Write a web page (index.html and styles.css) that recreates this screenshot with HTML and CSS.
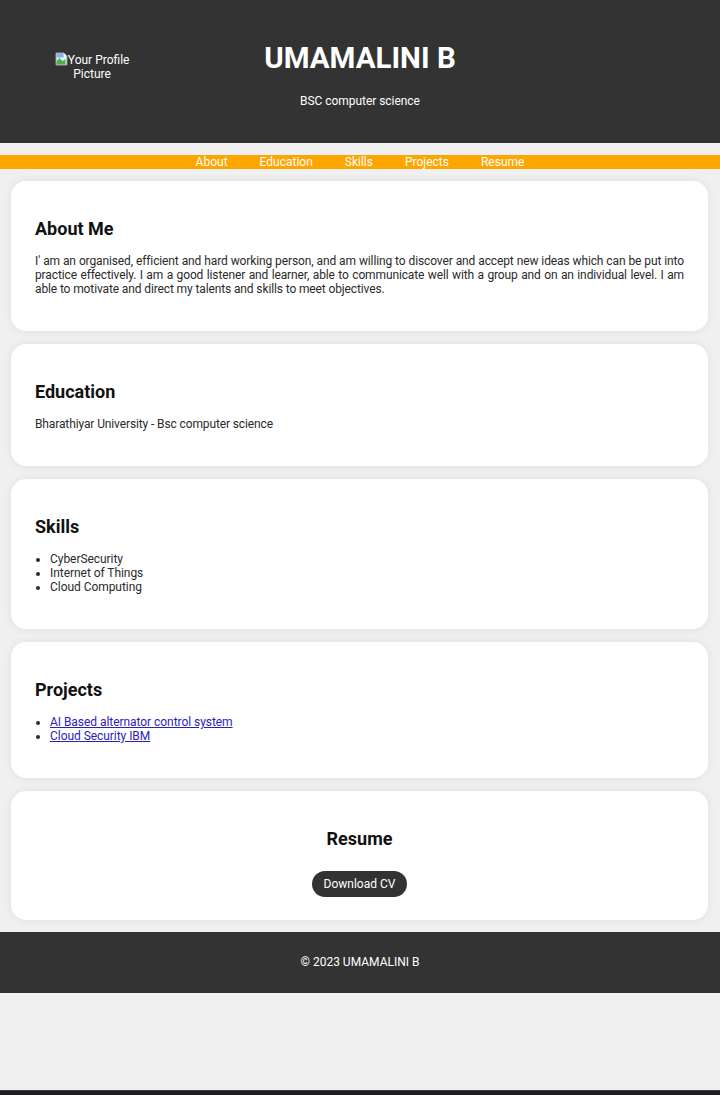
FILE: index.html
```html
<!DOCTYPE html>
<html lang="en">
<head>
<meta charset="utf-8">
<title>UMAMALINI B</title>
<link rel="stylesheet" href="styles.css">
</head>
<body>
<div class="page">
  <header class="site-header">
    <div class="profile">
      <span class="alt-text"><svg class="broken" width="13" height="14" viewBox="0 0 13 14"><path d="M1 1h8l3 3v9H1z" fill="#f4f4f4" stroke="#9a9a9a" stroke-width="1"/><path d="M1.5 1.5h7v4h-7z" fill="#7fb2e5"/><path d="M1.5 9l3-3 3 3 3-2v5.5h-9z" fill="#4caf50"/></svg>Your Profile Picture</span>
    </div>
    <div class="title-block">
      <h1 class="name">UMAMALINI B</h1>
      <p class="subtitle">BSC computer science</p>
    </div>
    <div class="spacer"></div>
  </header>

  <nav class="nav">
    <a href="#about">About</a>
    <a href="#education">Education</a>
    <a href="#skills">Skills</a>
    <a href="#projects">Projects</a>
    <a href="#resume">Resume</a>
  </nav>

  <main class="content">
    <section class="card" id="about">
      <h2>About Me</h2>
      <p class="justify">I' am an organised, efficient and hard working person, and am willing to discover and accept new ideas which can be put into practice effectively. I am a good listener and learner, able to communicate well with a group and on an individual level. I am able to motivate and direct my talents and skills to meet objectives.</p>
    </section>

    <section class="card" id="education">
      <h2>Education</h2>
      <p>Bharathiyar University - Bsc computer science</p>
    </section>

    <section class="card" id="skills">
      <h2>Skills</h2>
      <ul class="list">
        <li>CyberSecurity</li>
        <li>Internet of Things</li>
        <li>Cloud Computing</li>
      </ul>
    </section>

    <section class="card" id="projects">
      <h2>Projects</h2>
      <ul class="list">
        <li><a class="project-link" href="#">AI Based alternator control system</a></li>
        <li><a class="project-link" href="#">Cloud Security IBM</a></li>
      </ul>
    </section>

    <section class="card card-center" id="resume">
      <h2>Resume</h2>
      <p class="btn-row"><a class="btn" href="#">Download CV</a></p>
    </section>
  </main>

  <footer class="site-footer">© 2023 UMAMALINI B</footer>
  <div class="fill"></div>
  <div class="bottom-bar"></div>
</div>
</body>
</html>
```

FILE: styles.css
```css
html, body {
  margin: 0;
  padding: 0;
}

body {
  background: #f0f0f0;
  font-family: Roboto, "Liberation Sans", Arial, sans-serif;
  font-size: 12px;
  color: #222;
}

.page {
  min-height: 100vh;
  display: flex;
  flex-direction: column;
}

.site-header {
  background: #333333;
  color: #ffffff;
  display: grid;
  grid-template-columns: 1fr auto 1fr;
  padding: 41px 0 34px;
}

.profile {
  display: flex;
  justify-content: center;
  align-items: flex-start;
  padding-top: 11px;
  padding-right: 80px;
}

.alt-text {
  display: block;
  width: 80px;
  text-align: center;
  line-height: 14px;
  color: #ffffff;
  font-size: 12px;
}

.broken {
  vertical-align: -2px;
}

.title-block {
  text-align: center;
}

.name {
  margin: 0;
  font-size: 29.5px;
  line-height: 34px;
  font-weight: 700;
}

.subtitle {
  margin: 18px 0 0;
  line-height: 16px;
  font-size: 12px;
  letter-spacing: -0.05px;
}

.nav {
  background: #ffa500;
  margin: 12px 0;
  display: flex;
  justify-content: center;
  line-height: 14px;
}

.nav a {
  color: #ffffff;
  text-decoration: none;
  margin: 0 16px;
}

.content {
  display: flex;
  flex-direction: column;
  gap: 13px;
  margin: 0 12px 0 11px;
}

.card {
  background: #ffffff;
  border-radius: 15px;
  box-shadow: 0 0 8px rgba(0, 0, 0, 0.08);
  padding: 22px 24px 23px;
}

.card h2 {
  font-size: 18px;
  font-weight: 700;
  margin: 15px 0;
  line-height: 21px;
  color: #111;
}

.card p {
  margin: 12px 0;
  line-height: 14px;
  color: #2a2a2a;
  letter-spacing: -0.12px;
}

.card p.justify {
  text-align: justify;
}

.list {
  margin: 12px 0;
  padding-left: 15px;
  line-height: 14px;
  color: #2a2a2a;
  letter-spacing: -0.05px;
}

.project-link {
  color: #2a22b8;
  text-decoration: underline;
}

.card-center {
  text-align: center;
}

.card .btn-row {
  margin: 22px 0 0;
  line-height: 26px;
  letter-spacing: 0;
}

.btn {
  display: inline-block;
  background: #333333;
  color: #ffffff;
  text-decoration: none;
  border-radius: 13px;
  padding: 0 12px;
  height: 26px;
  line-height: 26px;
}

.site-footer {
  margin-top: 12px;
  background: #333333;
  color: #ffffff;
  text-align: center;
  padding: 23px 0 24px;
  line-height: 14px;
}

.fill {
  flex: 1;
}

.bottom-bar {
  height: 4px;
  background: #1e1e22;
  border-top: 1px solid #3c3c40;
}
```
